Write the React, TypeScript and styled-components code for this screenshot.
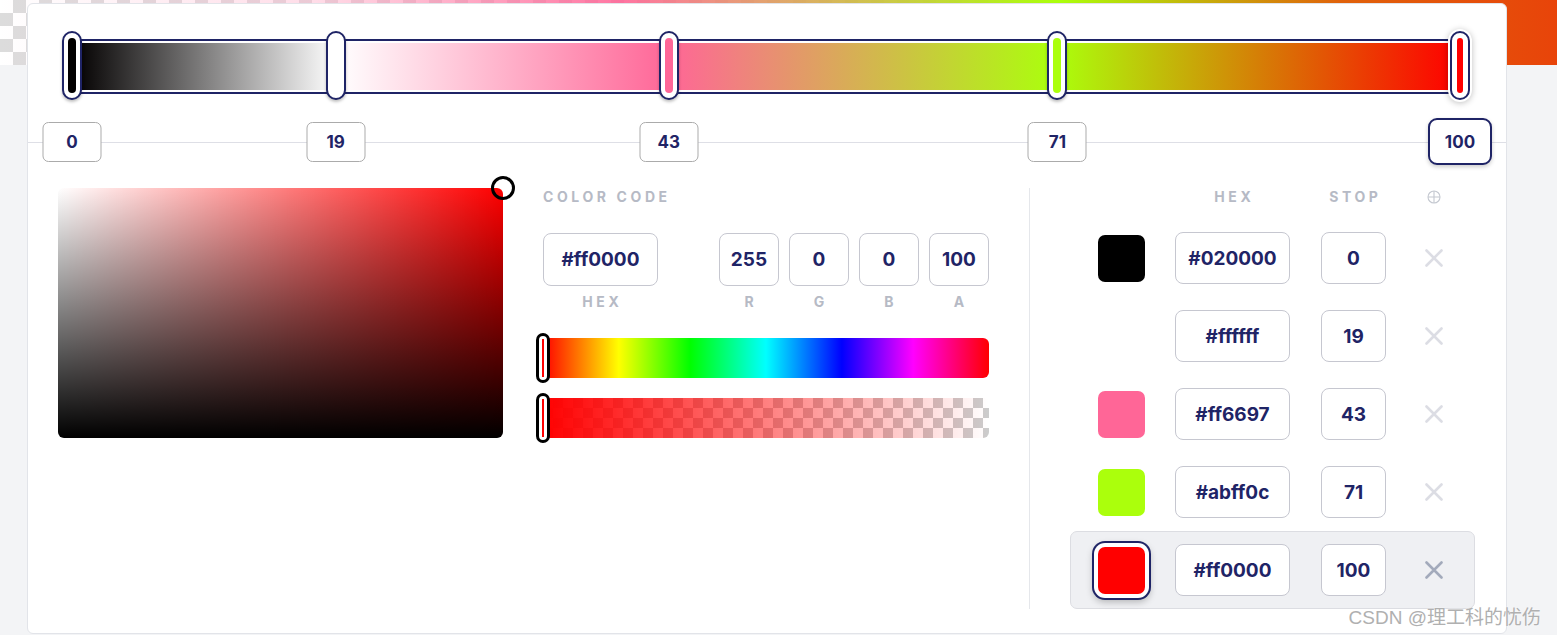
import React from 'react';
import styled, { createGlobalStyle, css } from 'styled-components';

const NAVY = '#1f2466';

const GlobalStyle = createGlobalStyle`
body {
  margin: 0;
  background-color: #f3f4f6;
  font-family: Inter, "Liberation Sans", sans-serif;
}
* { box-sizing: border-box; }
`;

type Stop = { hex: string; pos: number; active?: boolean };

const stops: Stop[] = [
  { hex: '#020000', pos: 0 },
  { hex: '#ffffff', pos: 19 },
  { hex: '#ff6697', pos: 43 },
  { hex: '#abff0c', pos: 71 },
  { hex: '#ff0000', pos: 100, active: true },
];

const Page = styled.div`
position: relative;
min-height: 635px;
overflow: hidden;
`;

const Preview = styled.div`
height: 65px;
background:
  linear-gradient(90deg, rgba(255,255,255,0) 0%, rgba(255,180,205,.45) 20%, rgba(255,102,151,.9) 40%, #abff0c 68%, #e0620a 86%, #e8440a 100%),
  conic-gradient(#dcdcdc 25%, #fff 0 50%, #dcdcdc 0 75%, #fff 0) 0 0 / 26px 26px;
`;

const Card = styled.div`
position: relative;
margin: -62px 50px 0 27px;
background-color: white;
border: 1px solid #e2e4e9;
border-radius: 6px;
`;

const Track = styled.div`
position: relative;
height: 69px;
margin: 27px 46px 0 44px;
padding-top: 8px;
`;

const Bar = styled.div`
height: 55px;
border: 2px solid ${NAVY};
padding: 2px 0;
background-color: white;
`;

const BarFill = styled.div`
height: 100%;
background: linear-gradient(90deg, ${stops.map((s) => `${s.hex} ${s.pos}%`).join(', ')});
`;

const Handle = styled.div<{ $active?: boolean }>`
position: absolute;
top: 0;
width: 20px;
height: 69px;
transform: translateX(-50%);
border: 2px solid ${NAVY};
border-radius: 10px;
background-color: white;
display: flex;
align-items: center;
justify-content: center;
box-shadow: 0 2px 3px rgba(0, 0, 0, 0.25);
${(p) => p.$active && css`
  box-shadow: 0 0 0 2px #fff, 0 1px 6px 2px rgba(0, 0, 0, 0.25);
`}
`;

const Pill = styled.div<{ $color: string; $active?: boolean }>`
width: ${(p) => (p.$active ? 6 : 8)}px;
height: 55px;
border-radius: 4px;
background-color: ${(p) => p.$color};
`;

const LabelRow = styled.div`
margin-top: 22px;
height: 40px;
background: linear-gradient(#dedfe6, #dedfe6) center / 100% 1px no-repeat;
`;

const LabelInner = styled.div`
position: relative;
height: 100%;
margin: 0 46px 0 44px;
`;

const StopLabel = styled.div<{ $active?: boolean }>`
position: absolute;
top: 0;
width: 59px;
height: 40px;
transform: translateX(-50%);
background-color: white;
border: 1px solid #ababab;
border-radius: 6px;
display: flex;
align-items: center;
justify-content: center;
color: ${NAVY};
font-size: 17px;
font-weight: 700;
${(p) => p.$active && css`
  top: -4px;
  width: 64px;
  height: 47px;
  border: 2px solid ${NAVY};
  border-radius: 9px;
  box-shadow: 0 2px 4px rgba(0, 0, 0, 0.2);
`}
`;

const Body = styled.div`
display: grid;
grid-template-columns: 445px 446px 1px 405px;
column-gap: 40px;
padding: 26px 31px 24px 30px;
`;

const Picker = styled.div`
position: relative;
height: 250px;
border-radius: 6px;
background:
  linear-gradient(to top, #000, rgba(0,0,0,0)),
  linear-gradient(to right, #fff, rgba(255,255,255,0)),
  #ff0000;
`;

const PickerCursor = styled.div`
position: absolute;
top: -12px;
right: -12px;
width: 24px;
height: 24px;
border: 3px solid #000;
border-radius: 50%;
`;

const Column = styled.div`
display: flex;
flex-direction: column;
`;

const Caption = styled.div<{ $w?: number }>`
height: 18px;
line-height: 18px;
font-size: 14px;
font-weight: 700;
letter-spacing: 3.6px;
color: #b6bac5;
text-transform: uppercase;
${(p) => p.$w && css`
  width: ${p.$w}px;
  text-align: center;
  text-indent: 3.6px;
`}
`;

const CodeRow = styled.div`
display: flex;
margin-top: 27px;
`;

const ChannelGroup = styled.div`
display: flex;
gap: 10px;
margin-left: auto;
`;

const Field = styled.div`
display: flex;
flex-direction: column;
align-items: center;
gap: 7px;
`;

const Box = styled.input<{ $w: number; $h?: number }>`
width: ${(p) => p.$w}px;
height: ${(p) => p.$h ?? 53}px;
border: 1px solid #c6c7d0;
border-radius: 8px;
background-color: white;
text-align: center;
font-family: Inter, "Liberation Sans", sans-serif;
font-size: 19px;
font-weight: 700;
color: ${NAVY};
padding: 0;
outline: none;
`;

const Slider = styled.div<{ $kind: 'hue' | 'alpha' }>`
position: relative;
height: 40px;
margin-top: ${(p) => (p.$kind === 'hue' ? 27 : 20)}px;
border-radius: 0 6px 6px 0;
background: ${(p) =>
  p.$kind === 'hue'
    ? 'linear-gradient(90deg, #f00 0%, #ff0 17%, #0f0 33%, #0ff 50%, #00f 67%, #f0f 83%, #f00 100%)'
    : 'linear-gradient(90deg, #ff0000, rgba(255,0,0,0)), conic-gradient(#ccc 25%, #fff 0 50%, #ccc 0 75%, #fff 0) 0 0 / 20px 20px'};
`;

const SliderHandle = styled.div`
position: absolute;
left: -7px;
top: -5px;
width: 14px;
height: 50px;
border: 3px solid #000;
border-radius: 7px;
background-color: white;
display: flex;
justify-content: center;
align-items: center;
`;

const SliderMark = styled.div`
width: 2px;
height: 38px;
background-color: #ff0000;
`;

const Divider = styled.div`
background-color: #e5e7eb;
`;

const COLS = '77px 146px 104px 18px';

const ListHeader = styled.div`
display: grid;
grid-template-columns: ${COLS};
align-items: center;
padding-left: 28px;
margin-bottom: 13px;
`;

const StopRow = styled.div<{ $active?: boolean }>`
display: grid;
grid-template-columns: ${COLS};
align-items: center;
height: 78px;
padding-left: 27px;
border: 1px solid transparent;
border-radius: 7px;
${(p) => p.$active && css`
  background-color: #eff0f3;
  border-color: #dcdde2;
`}
`;

const Swatch = styled.div<{ $color: string; $active?: boolean }>`
width: 47px;
height: 47px;
border-radius: 7px;
background-color: ${(p) => p.$color};
${(p) => p.$active && css`
  box-shadow: 0 0 0 4px #fff, 0 0 0 6px ${NAVY}, 0 3px 7px 5px rgba(0, 0, 0, 0.25);
`}
`;

const IconWrap = styled.div<{ $color: string }>`
display: flex;
justify-content: center;
color: ${(p) => p.$color};
`;

const Watermark = styled.div`
position: absolute;
right: 16px;
bottom: 6px;
font-family: "Liberation Sans", "Noto Sans CJK SC", sans-serif;
font-size: 19px;
color: #b0b0b0;
text-shadow: 0 0 2px #fff;
`;

function CloseIcon() {
  return (
    <svg width="18" height="18" viewBox="0 0 18 18">
      <path d="M1.5 1.5 L16.5 16.5 M16.5 1.5 L1.5 16.5" stroke="currentColor" strokeWidth="2.6" strokeLinecap="round" />
    </svg>
  );
}

function AddIcon() {
  return (
    <svg width="14" height="14" viewBox="0 0 14 14">
      <circle cx="7" cy="7" r="6" fill="none" stroke="currentColor" strokeWidth="1.1" />
      <path d="M7 1 V13 M1 7 H13" stroke="currentColor" strokeWidth="1.1" />
    </svg>
  );
}

export default function App() {
  return (
    <Page>
      <GlobalStyle />
      <Preview />
      <Card>
        <Track>
          <Bar>
            <BarFill />
          </Bar>
          {stops.map((s) => (
            <Handle key={s.pos} $active={s.active} style={{ left: `${s.pos}%` }}>
              <Pill $color={s.hex} $active={s.active} />
            </Handle>
          ))}
        </Track>
        <LabelRow>
          <LabelInner>
            {stops.map((s) => (
              <StopLabel key={s.pos} $active={s.active} style={{ left: `${s.pos}%` }}>
                {s.pos}
              </StopLabel>
            ))}
          </LabelInner>
        </LabelRow>

        <Body>
          <Picker>
            <PickerCursor />
          </Picker>

          <Column>
            <Caption>Color code</Caption>
            <CodeRow>
              <Field>
                <Box $w={115} readOnly value="#ff0000" />
                <Caption $w={115}>Hex</Caption>
              </Field>
              <ChannelGroup>
                {[['255', 'R'], ['0', 'G'], ['0', 'B'], ['100', 'A']].map(([v, l]) => (
                  <Field key={l}>
                    <Box $w={60} readOnly value={v} />
                    <Caption $w={60}>{l}</Caption>
                  </Field>
                ))}
              </ChannelGroup>
            </CodeRow>
            <Slider $kind="hue">
              <SliderHandle>
                <SliderMark />
              </SliderHandle>
            </Slider>
            <Slider $kind="alpha">
              <SliderHandle>
                <SliderMark />
              </SliderHandle>
            </Slider>
          </Column>

          <Divider />

          <Column>
            <ListHeader>
              <span />
              <Caption $w={115}>Hex</Caption>
              <Caption $w={65}>Stop</Caption>
              <IconWrap $color="#c4c8d0">
                <AddIcon />
              </IconWrap>
            </ListHeader>
            {stops.map((s) => (
              <StopRow key={s.pos} $active={s.active}>
                <Swatch $color={s.hex === '#020000' ? '#000' : s.hex} $active={s.active} />
                <Box $w={115} $h={52} readOnly value={s.hex} />
                <Box $w={65} $h={52} readOnly value={String(s.pos)} />
                <IconWrap $color={s.active ? '#a3aabb' : '#dcdde4'}>
                  <CloseIcon />
                </IconWrap>
              </StopRow>
            ))}
          </Column>
        </Body>
      </Card>
      <Watermark>CSDN @理工科的忧伤</Watermark>
    </Page>
  );
}
